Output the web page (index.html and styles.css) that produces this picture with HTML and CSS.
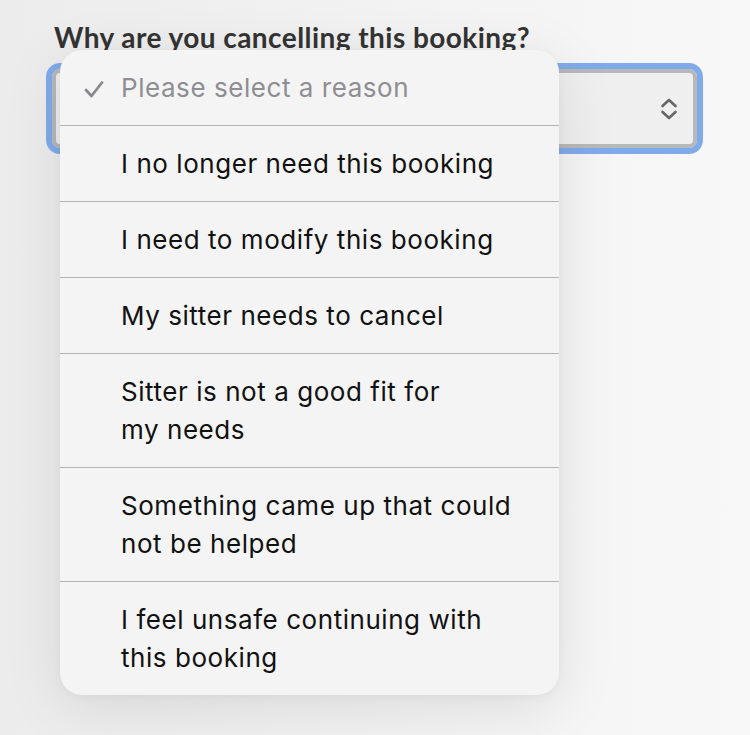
FILE: index.html
```html
<!DOCTYPE html>
<html lang="en">
<head>
    <meta charset="UTF-8">
    <meta name="viewport" content="width=device-width, initial-scale=1.0">
    <title>Cancel booking</title>
    <link rel="stylesheet" href="styles.css">
</head>
<body>
    <div class="form-field">
        <label class="field-label" for="reason">Why are you cancelling this booking?</label>
        <div class="select-box" id="reason">
            <span class="select-value"></span>
            <svg class="select-arrows" width="20" height="24" viewBox="0 0 20 24">
                <path d="M3.5 9 L10 3 L16.5 9" />
                <path d="M3.5 15 L10 21 L16.5 15" />
            </svg>
        </div>

        <ul class="picker">
            <li class="picker-item selected">
                <svg class="check" width="20" height="17" viewBox="0 0 20 17">
                    <path d="M2 9 L7.5 15 L18 1.5" />
                </svg>
                Please select a reason
            </li>
            <li class="picker-item">I no longer need this booking</li>
            <li class="picker-item">I need to modify this booking</li>
            <li class="picker-item">My sitter needs to cancel</li>
            <li class="picker-item">Sitter is not a good fit for<br>my needs</li>
            <li class="picker-item">Something came up that could<br>not be helped</li>
            <li class="picker-item">I feel unsafe continuing with<br>this booking</li>
        </ul>
    </div>
</body>
</html>
```

FILE: styles.css
```css
body {
    margin: 0;
    background: linear-gradient(90deg, #ececec 0%, #f2f2f2 50%, #f8f8f8 100%);
    font-family: Inter, "Noto Sans", sans-serif;
    height: 735px;
    overflow: hidden;
}
.form-field {
    position: relative;
    padding: 22px 0 0 52px;
    width: 645px;
}
.field-label {
    display: block;
    font-family: Lato, sans-serif;
    font-weight: bold;
    font-size: 28px;
    letter-spacing: 0.45px;
    color: #333;
    padding-left: 2px;
    line-height: 30px;
    margin-bottom: 17px;
}
.select-box {
    height: 79px;
    box-sizing: border-box;
    border: 4px solid #b7b8b9;
    border-radius: 8px;
    background: #efefef;
    outline: 6px solid #80abea;
    outline-offset: 0;
    display: flex;
    align-items: center;
    justify-content: flex-end;
    padding-right: 14px;
}
.select-arrows path {
    fill: none;
    stroke: #666;
    stroke-width: 2.6;
    stroke-linecap: round;
    stroke-linejoin: round;
}
/* open option list, drawn over the select */
.picker {
    position: absolute;
    left: 60px;
    top: 50px;
    width: 499px;
    margin: 0;
    padding: 0;
    list-style: none;
    background: #f4f4f5;
    border-radius: 22px;
    box-shadow: 0 12px 60px rgba(0, 0, 0, 0.10), 0 2px 10px rgba(0, 0, 0, 0.04);
    overflow: hidden;
}
.picker-item {
    position: relative;
    padding: 19px 20px 18px 61px;
    font-size: 26px;
    letter-spacing: 0.55px;
    line-height: 38px;
    color: #111;
    white-space: nowrap;
    border-bottom: 1px solid #b4b4b6;
}
.picker-item:last-child {
    border-bottom: none;
}
.picker-item.selected {
    color: #8e8e92;
}
.check {
    position: absolute;
    left: 24px;
    top: 31px;
}
.check path {
    fill: none;
    stroke: #8a8a8e;
    stroke-width: 2.8;
    stroke-linecap: round;
    stroke-linejoin: round;
}
```
